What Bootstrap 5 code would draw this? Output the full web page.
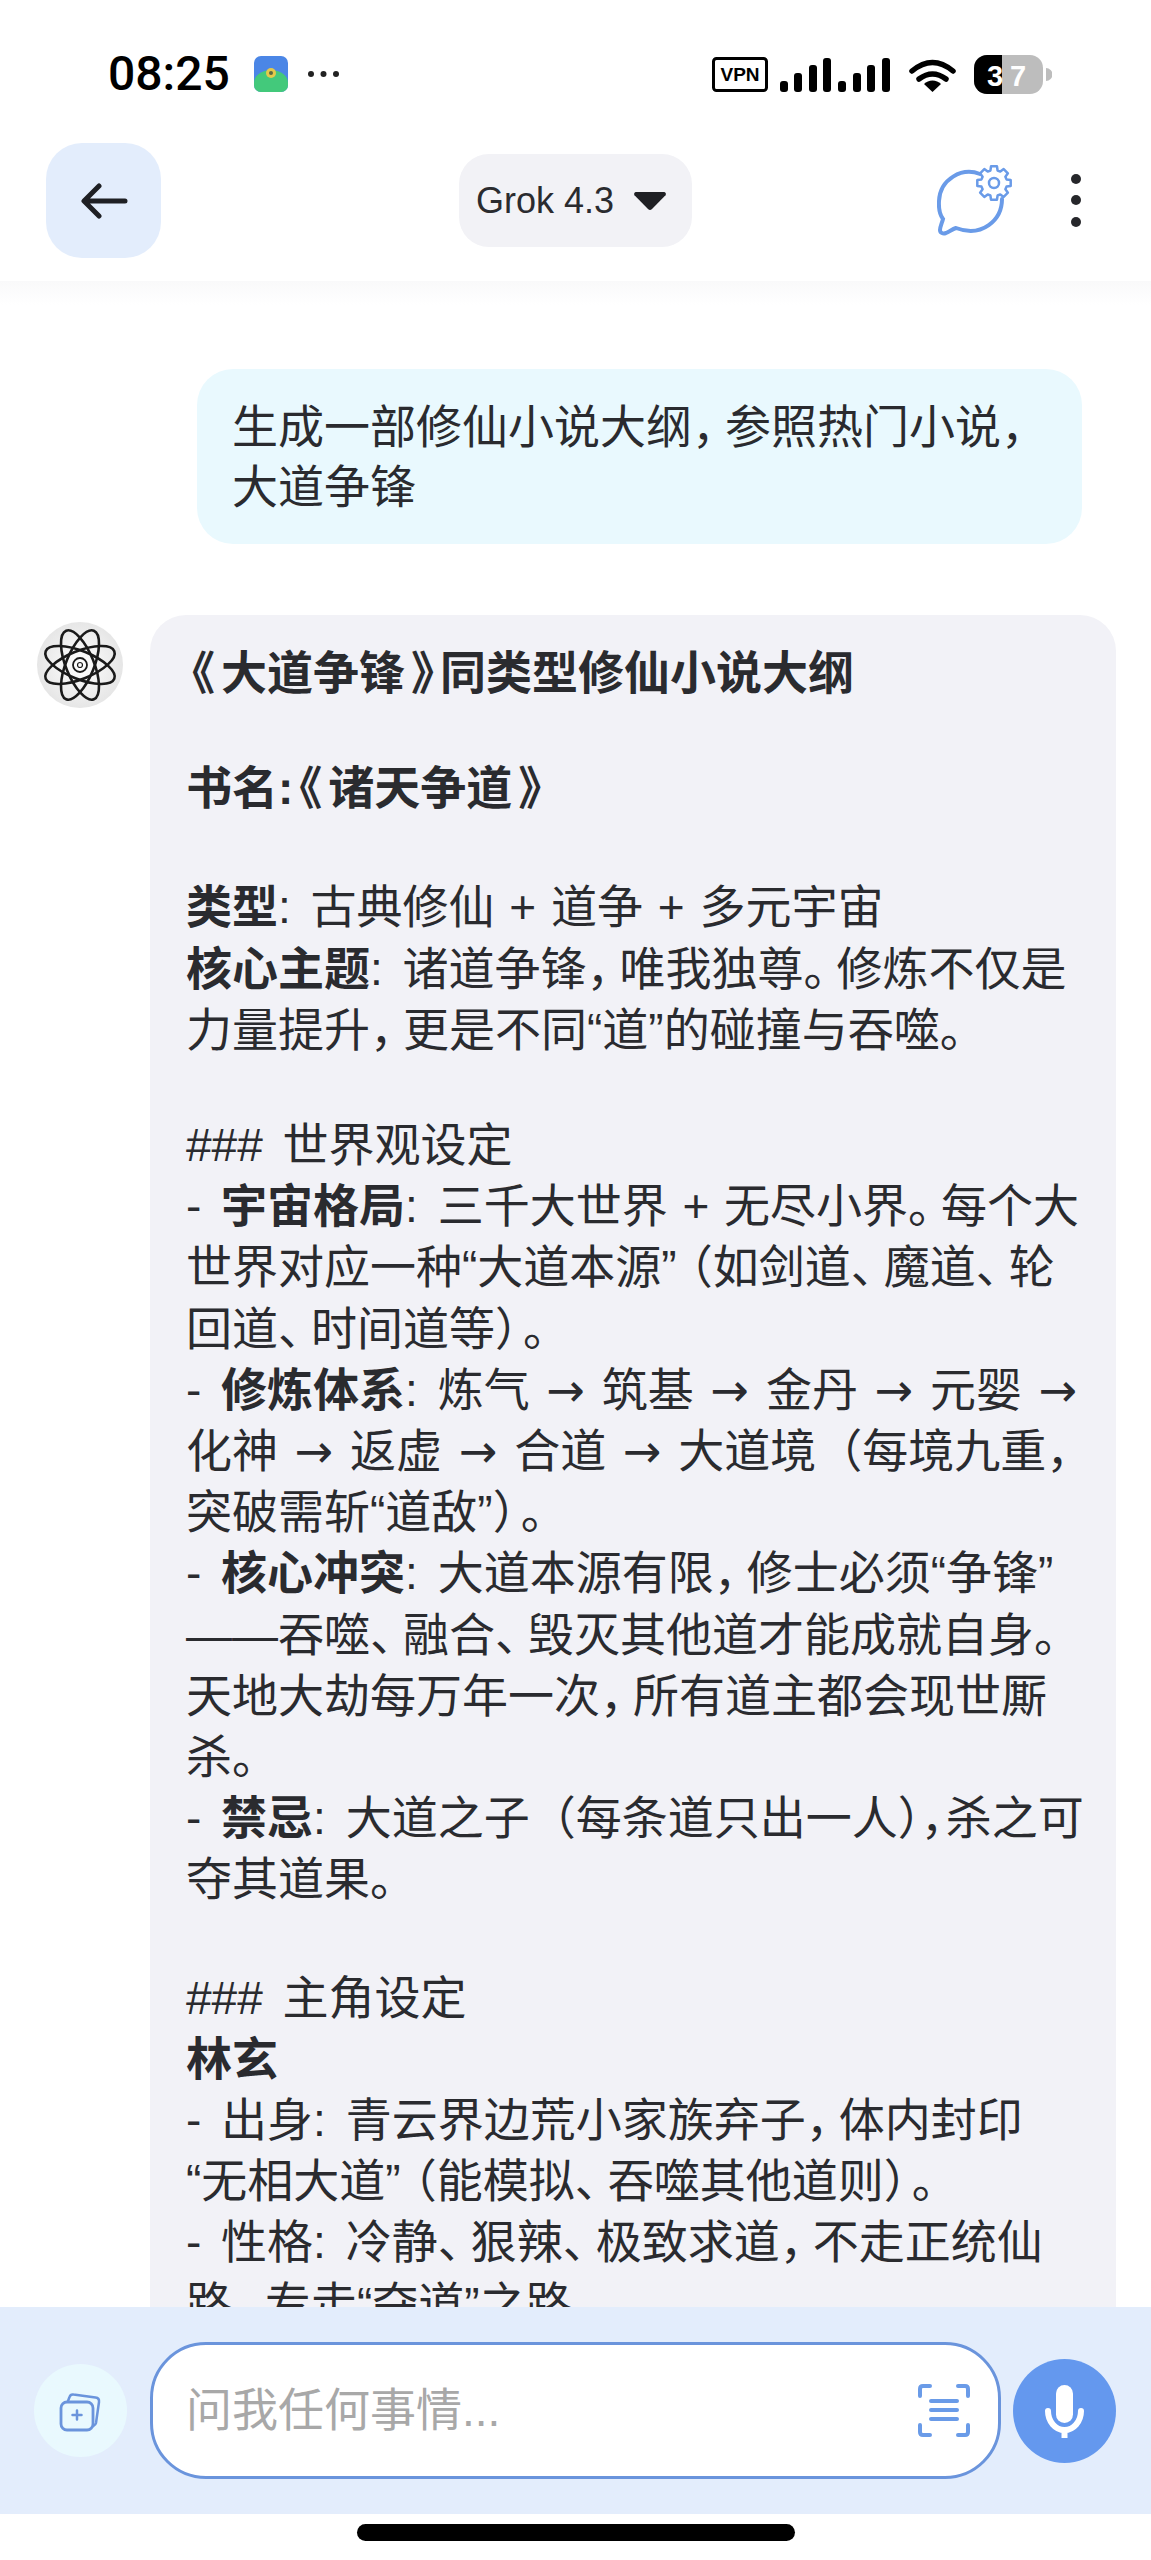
<!DOCTYPE html>
<html lang="zh">
<head>
<meta charset="UTF-8">
<meta name="viewport" content="width=device-width, initial-scale=1.0">
<title>Grok 4.3</title>
<link href="https://cdn.jsdelivr.net/npm/bootstrap@5.3.0/dist/css/bootstrap.min.css" rel="stylesheet">
<style>
html, body { margin: 0; background: #fff; }
body { width: 1151px; height: 2560px; overflow: hidden; font-family: "Liberation Sans", "Noto Sans CJK SC", sans-serif; color: #2a2b2f; text-spacing-trim: space-all; }
.status-row { height: 140px; padding: 51px 99px 0 108px; }
.status-left { height: 46px; }
.clock { font-size: 48px; font-weight: 500; color: #000; line-height: 46px; font-family: "Roboto", sans-serif; margin-right: 24px; }
.more-dots { margin-left: 19px; }
.top-bar { height: 141px; padding-left: 46px; padding-bottom: 20px; }
.back-btn { width: 115px; height: 115px; border-radius: 36px; background: #e3edfc; }
.model-btn { width: 233px; height: 93px; border-radius: 30px; background: #f2f2f6; font-size: 36px; margin-left: 298px; margin-right: 245px; padding-left: 17px; gap: 20px; }
.dots-menu { margin-left: 58px; }
.chat-area { height: 2026px; overflow: hidden; background: linear-gradient(#f9f9fa, #fff 24px); }
.user-msg { margin: 88px 0 0 197px; width: 885px; border-radius: 36px; background: #e9f9fe; padding: 28px 35px 27px; font-size: 46px; line-height: 60px; white-space: nowrap; }
.bot-row { margin: 71px 0 0 37px; }
.bot-avatar { width: 86px; height: 86px; margin: 7px 27px 0 0; flex-shrink: 0; }
.bot-msg { width: 966px; border-radius: 36px 36px 0 0; background: #f2f2f7; padding: 28px 36px 0; font-size: 46px; line-height: 61.2px; white-space: nowrap; }
.bot-msg b { font-weight: 700; }
.blank-line { height: 54px; }
.blank-line-wide { height: 58px; }
.blank-line-last { height: 57px; }
.hw { font-feature-settings: "halt"; margin-right: 10px; }
.qt { font-feature-settings: "halt"; margin: 0 6px; }
.cb { font-feature-settings: "halt"; margin-right: 5px; }
.cc { font-feature-settings: "halt"; margin-right: 2px; }
.ob { font-feature-settings: "halt"; margin-left: 13px; }
.arw { font-family: "DejaVu Sans", sans-serif; margin: 0 4px; }
.pl { margin: 0 2px; }
.sp { margin-right: 7px; }
.input-bar { height: 207px; background: #e3edfc; padding-left: 34px; }
.add-btn { width: 93px; height: 93px; border-radius: 50%; background: #e9f9fe; margin-right: 23px; }
.ask-box { width: 851px; height: 137px; border-radius: 56px; border: 3px solid #6a94dc; background: #fff; padding: 0 28px 0 33px; font-size: 46px; color: #a8a8a8; }
.mic-btn { width: 103px; height: 104px; border-radius: 50%; background: #6498ee; margin-left: 12px; }
.home-zone { height: 46px; padding-top: 10px; }
.home-bar { width: 438px; height: 17px; border-radius: 9px; background: #000; }
</style>
</head>
<body>
<div class="status-row d-flex align-items-start justify-content-between">
  <div class="status-left d-flex align-items-center">
    <span class="clock">08:25</span>
    <svg width="34" height="36" viewBox="0 0 34 36"><rect width="34" height="36" rx="7" fill="#4b86e6"/><path d="M0 27a17 13 0 0 1 34 0v2a7 7 0 0 1-7 7H7a7 7 0 0 1-7-7z" fill="#43c97b"/><circle cx="17" cy="17" r="5" fill="#e4c94a"/><circle cx="17" cy="17" r="2" fill="#5a6a40"/></svg>
    <svg width="33" height="8" viewBox="0 0 33 8" class="more-dots"><circle cx="4" cy="4" r="3" fill="#222"/><circle cx="16.500" cy="4" r="3" fill="#222"/><circle cx="29" cy="4" r="3" fill="#222"/></svg>
  </div>
  <svg width="340" height="46" viewBox="0 0 340 46">
    <rect x="1.500" y="7.500" width="53" height="32" rx="3" fill="none" stroke="#000" stroke-width="3"/>
    <text x="28" y="30" font-size="19" font-weight="700" text-anchor="middle" font-family="Liberation Sans">VPN</text>
    <g fill="#000">
      <rect x="68" y="30" width="8" height="11" rx="3"/><rect x="82" y="22" width="8" height="19" rx="3"/><rect x="97" y="14" width="8" height="27" rx="3"/><rect x="111" y="7" width="8" height="34" rx="3"/>
      <rect x="126" y="30" width="8" height="11" rx="3"/><rect x="141" y="22" width="8" height="19" rx="3"/><rect x="155" y="14" width="8" height="27" rx="3"/><rect x="170" y="7" width="8" height="34" rx="3"/>
      <path d="M220.500 41l-8.500-8a12 12 0 0 1 17 0z"/>
    </g>
    <path d="M200 20q20.500-17 41 0M207 28q13.500-10 27 0" fill="none" stroke="#000" stroke-width="5.500" stroke-linecap="round"/>
    <rect x="262" y="4" width="69" height="39" rx="13" fill="#bdbdbd"/>
    <path d="M275 4h15v39h-15a13 13 0 0 1-13-13V17a13 13 0 0 1 13-13z" fill="#000"/>
    <text x="283" y="35" font-size="29" font-weight="700" text-anchor="middle" fill="#fff" font-family="Liberation Sans">3</text>
    <text x="306" y="35" font-size="29" font-weight="700" text-anchor="middle" fill="#fff" font-family="Liberation Sans">7</text>
    <path d="M334 17a6 6 0 0 1 0 13z" fill="#bdbdbd"/>
  </svg>
</div>
<div class="top-bar d-flex align-items-center">
  <div class="back-btn d-flex align-items-center justify-content-center flex-shrink-0">
    <svg width="48" height="36" viewBox="0 0 48 36"><path d="M19 3L4 18l15 15M5 18h40" fill="none" stroke="#1f2024" stroke-width="5" stroke-linecap="round" stroke-linejoin="round"/></svg>
  </div>
  <div class="model-btn d-flex align-items-center flex-shrink-0">
    <span>Grok 4.3</span>
    <svg width="32" height="18" viewBox="0 0 32 18"><path d="M2 0h28a2 2 0 0 1 1.500 3.200L18 17a3 3 0 0 1-4 0L.5 3.200A2 2 0 0 1 2 0z" fill="#1f2024"/></svg>
  </div>
  <svg width="76" height="72" viewBox="0 0 76 72" class="flex-shrink-0">
    <path d="M43 9C25 2 3 14 2 36c-.5 8 1 14 4 18-1 4-3 8-3 11 0 3 3 4 6 3 4-2 7-4 10-5 26 10 46-8 46-29" fill="none" stroke="#6a9be8" stroke-width="4" stroke-linecap="round"/>
    <g transform="translate(57 18)" fill="#fff" stroke="#6a9be8" stroke-width="2.500" stroke-linejoin="round">
      <polygon points="12.500,-3.600 16.700,-2.950 16.700,2.950 12.500,3.600 11.400,6.300 13.900,9.700 9.700,13.900 6.300,11.400 3.600,12.500 2.950,16.700 -2.950,16.700 -3.600,12.500 -6.300,11.400 -9.700,13.900 -13.900,9.700 -11.400,6.300 -12.500,3.600 -16.700,2.950 -16.700,-2.950 -12.500,-3.600 -11.400,-6.300 -13.900,-9.700 -9.700,-13.900 -6.300,-11.400 -3.600,-12.500 -2.950,-16.700 2.950,-16.700 3.600,-12.500 6.300,-11.400 9.700,-13.900 13.900,-9.700 11.400,-6.300"/>
      <circle r="5"/>
    </g>
  </svg>
  <svg width="10" height="53" viewBox="0 0 10 53" class="dots-menu flex-shrink-0"><circle cx="5" cy="5" r="5" fill="#26272b"/><circle cx="5" cy="26" r="5" fill="#26272b"/><circle cx="5" cy="48" r="5" fill="#26272b"/></svg>
</div>
<div class="chat-area">
  <div class="user-msg">生成一部修仙小说大纲<span class="hw">，</span>参照热门小说<span class="hw">，</span><br>大道争锋</div>
  <div class="bot-row d-flex align-items-start">
    <svg class="bot-avatar" viewBox="0 0 86 86">
      <defs><radialGradient id="avatarFill"><stop offset="0" stop-color="#fff"/><stop offset="1" stop-color="#e6e6e6"/></radialGradient></defs>
      <circle cx="43" cy="43" r="43" fill="url(#avatarFill)"/>
      <g fill="none" stroke="#1a1a1a" stroke-width="2.600" transform="translate(43 43)">
        <ellipse rx="37" ry="14" transform="rotate(22)"/>
        <ellipse rx="37" ry="14" transform="rotate(68)"/>
        <ellipse rx="37" ry="14" transform="rotate(112)"/>
        <ellipse rx="37" ry="14" transform="rotate(158)"/>
        <circle r="7" stroke-width="1.800"/>
        <circle r="2.500" stroke-width="1.200"/>
      </g>
    </svg>
    <div class="bot-msg">
      <div><b><span class="qt">《</span>大道争锋<span class="qt">》</span>同类型修仙小说大纲</b></div>
      <div class="blank-line"></div>
      <div><b>书名:<span class="qt">《</span>诸天争道<span class="qt">》</span></b></div>
      <div class="blank-line-wide"></div>
      <div><b>类型</b><span class="sp">:</span> 古典修仙 <span class="pl">+</span> 道争 <span class="pl">+</span> 多元宇宙</div>
      <div><b>核心主题</b><span class="sp">:</span> 诸道争锋<span class="hw">，</span>唯我独尊<span class="hw">。</span>修炼不仅是</div>
      <div>力量提升<span class="hw">，</span>更是不同“道”的碰撞与吞噬<span class="hw">。</span></div>
      <div class="blank-line"></div>
      <div><span class="sp">###</span> 世界观设定</div>
      <div><span class="sp">-</span> <b>宇宙格局</b><span class="sp">:</span> 三千大世界 <span class="pl">+</span> 无尽小界<span class="hw">。</span>每个大</div>
      <div>世界对应一种“大道本源”<span class="ob">（</span>如剑道<span class="hw">、</span>魔道<span class="hw">、</span>轮</div>
      <div>回道<span class="hw">、</span>时间道等<span class="cb">）</span><span class="hw">。</span></div>
      <div><span class="sp">-</span> <b>修炼体系</b><span class="sp">:</span> 炼气 <span class="arw">→</span> 筑基 <span class="arw">→</span> 金丹 <span class="arw">→</span> 元婴 <span class="arw">→</span></div>
      <div>化神 <span class="arw">→</span> 返虚 <span class="arw">→</span> 合道 <span class="arw">→</span> 大道境（每境九重<span class="hw">，</span></div>
      <div>突破需斩“道敌”<span class="cb">）</span><span class="hw">。</span></div>
      <div><span class="sp">-</span> <b>核心冲突</b><span class="sp">:</span> 大道本源有限<span class="hw">，</span>修士必须“争锋”</div>
      <div>——吞噬<span class="hw">、</span>融合<span class="hw">、</span>毁灭其他道才能成就自身<span class="hw">。</span></div>
      <div>天地大劫每万年一次<span class="hw">，</span>所有道主都会现世厮</div>
      <div>杀<span class="hw">。</span></div>
      <div><span class="sp">-</span> <b>禁忌</b><span class="sp">:</span> 大道之子（每条道只出一人<span class="cc">），</span>杀之可</div>
      <div>夺其道果<span class="hw">。</span></div>
      <div class="blank-line-last"></div>
      <div><span class="sp">###</span> 主角设定</div>
      <div><b>林玄</b></div>
      <div><span class="sp">-</span> 出身<span class="sp">:</span> 青云界边荒小家族弃子<span class="hw">，</span>体内封印</div>
      <div>“无相大道”<span class="ob">（</span>能模拟<span class="hw">、</span>吞噬其他道则<span class="cb">）</span><span class="hw">。</span></div>
      <div><span class="sp">-</span> 性格<span class="sp">:</span> 冷静<span class="hw">、</span>狠辣<span class="hw">、</span>极致求道<span class="hw">，</span>不走正统仙</div>
      <div>路<span class="hw">，</span>专走“夺道”之路</div>
    </div>
  </div>
</div>
<div class="input-bar d-flex align-items-center">
  <div class="add-btn d-flex align-items-center justify-content-center flex-shrink-0">
    <svg width="93" height="93" viewBox="0 0 93 93" fill="none" stroke="#6a94dc" stroke-linecap="round" stroke-linejoin="round">
      <path d="M34 37l1.500-4q1-3 4-2.500l22 3q4 .5 3.500 4.500l-3 21q-.5 2-2.500 3" stroke-width="2.500"/>
      <rect x="27" y="38" width="32" height="28" rx="6" stroke-width="2.800" fill="#e9f9fe"/>
      <path d="M43 46.500v9M38.500 51h9" stroke-width="2.500"/>
    </svg>
  </div>
  <div class="ask-box d-flex align-items-center justify-content-between flex-shrink-0">
    <span>问我任何事情...</span>
    <svg width="52" height="53" viewBox="0 0 52 53" fill="none" stroke="#6a9be8" stroke-linecap="round">
      <path d="M12 2H5Q2 2 2 5v7M40 2h7q3 0 3 3v7M2 41v7q0 3 3 3h7M50 41v7q0 3-3 3h-7" stroke-width="4"/>
      <path d="M13 17h26M13 26h26M13 35h26" stroke-width="4"/>
    </svg>
  </div>
  <div class="mic-btn d-flex flex-shrink-0">
    <svg width="103" height="104" viewBox="0 0 103 104" fill="none">
      <rect x="43" y="26" width="17" height="38" rx="8.500" fill="#fff"/>
      <path d="M35 52a16.500 19 0 0 0 33 0" stroke="#fff" stroke-width="6" stroke-linecap="round"/>
      <path d="M51.500 70v9" stroke="#fff" stroke-width="6"/>
    </svg>
  </div>
</div>
<div class="home-zone d-flex justify-content-center">
  <div class="home-bar"></div>
</div>
</body>
</html>
